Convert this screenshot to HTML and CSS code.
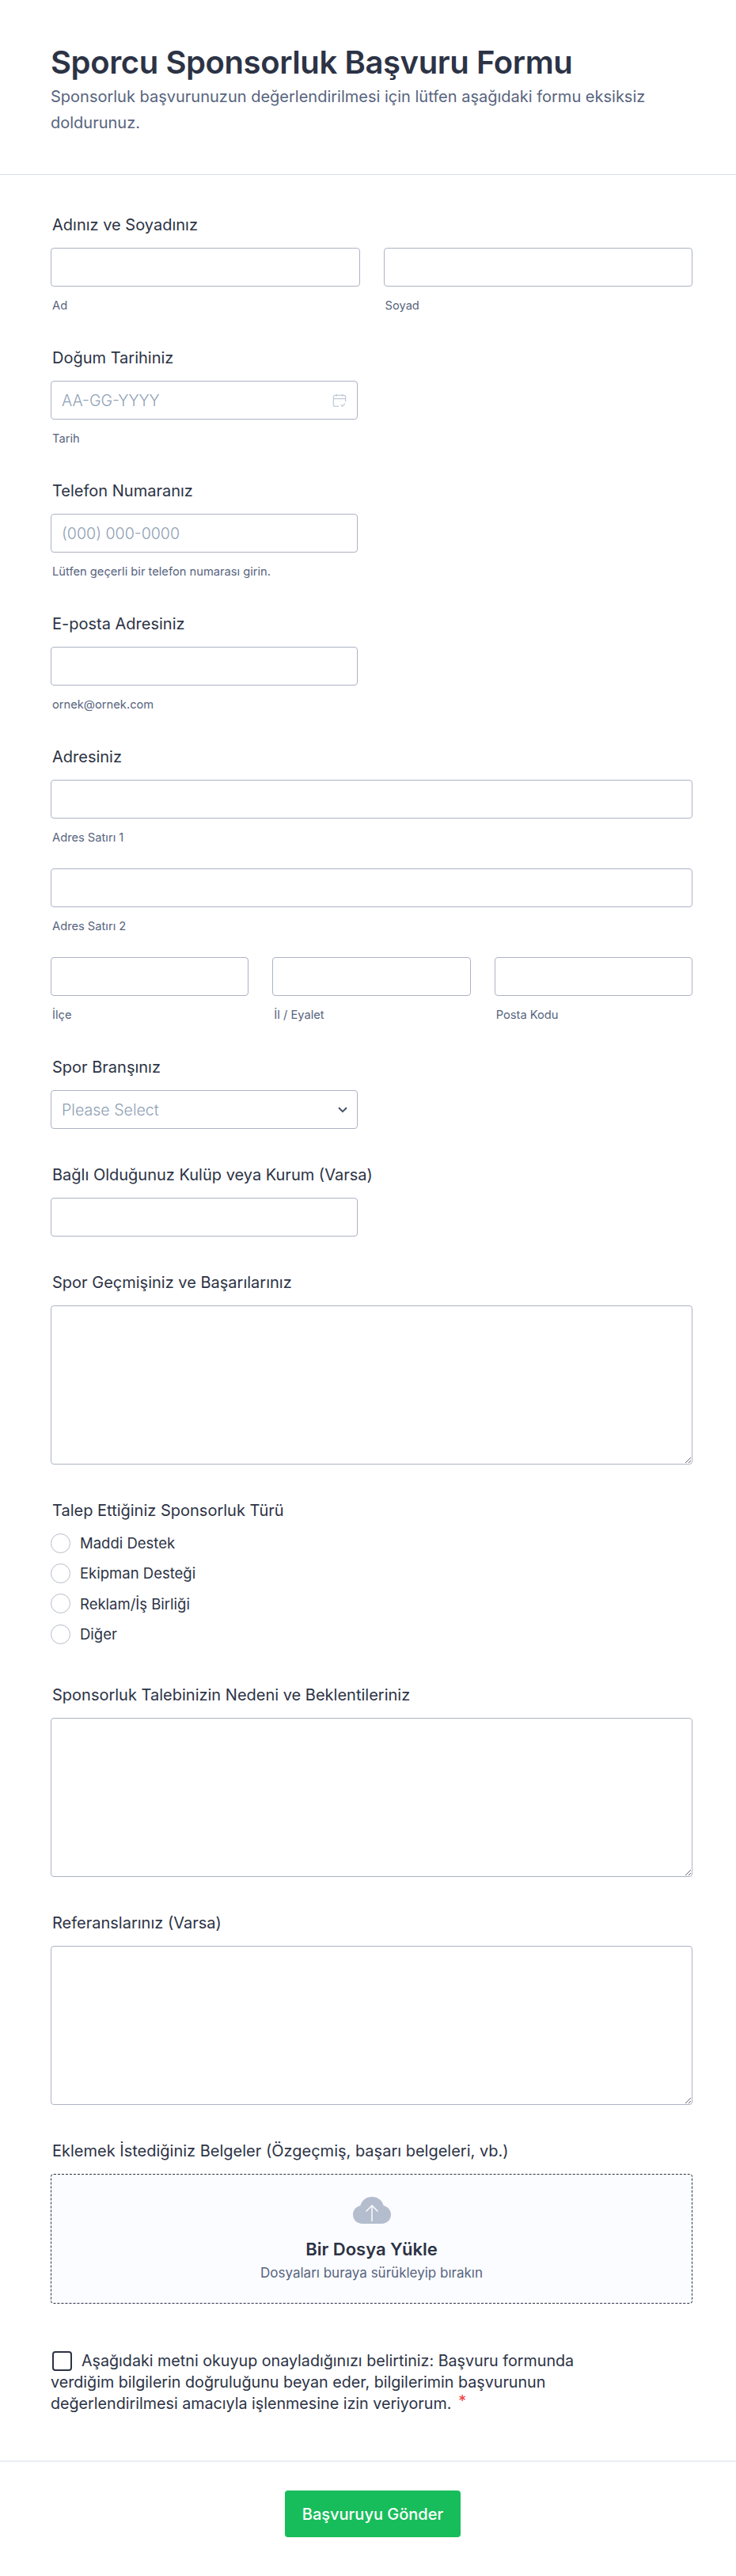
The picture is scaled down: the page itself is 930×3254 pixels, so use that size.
FILE: index.html
```html
<!DOCTYPE HTML>
<html lang="tr">

<head>
  <meta charset="utf-8">
  <title>Sporcu Sponsorluk Başvuru Formu</title>
  <link rel="stylesheet" href="styles.css">
</head>

<body>

  <header class="form-header">
    <h1>Sporcu Sponsorluk Başvuru Formu</h1>
    <p>Sponsorluk başvurunuzun değerlendirilmesi için lütfen aşağıdaki formu eksiksiz doldurunuz.</p>
  </header>

  <form class="form-body">

    <div class="field">
      <label class="field-label">Adınız ve Soyadınız</label>
      <div class="cols-2">
        <div>
          <input class="text-input" type="text">
          <span class="sublabel">Ad</span>
        </div>
        <div>
          <input class="text-input" type="text">
          <span class="sublabel">Soyad</span>
        </div>
      </div>
    </div>

    <div class="field">
      <label class="field-label">Doğum Tarihiniz</label>
      <div class="short input-wrap">
        <input class="text-input" type="text" placeholder="AA-GG-YYYY">
        <svg class="input-icon" width="18" height="18" viewBox="0 0 18 18" fill="none" stroke="#c3cad8" stroke-width="1.3">
          <path d="M8 16.400H3.200a1.800 1.800 0 0 1-1.800-1.800V4.200a1.800 1.800 0 0 1 1.800-1.800h11.600a1.800 1.800 0 0 1 1.800 1.800v6.300" />
          <path d="M1.400 6.600h15.200M5.200 .8v3M12.800 .8v3" />
          <path d="M10.800 14.400l1.800 1.800 3.400-3.600" />
        </svg>
      </div>
      <span class="sublabel">Tarih</span>
    </div>

    <div class="field">
      <label class="field-label">Telefon Numaranız</label>
      <div class="short">
        <input class="text-input" type="text" placeholder="(000) 000-0000">
      </div>
      <span class="sublabel">Lütfen geçerli bir telefon numarası girin.</span>
    </div>

    <div class="field">
      <label class="field-label">E-posta Adresiniz</label>
      <div class="short">
        <input class="text-input" type="text">
      </div>
      <span class="sublabel">ornek@ornek.com</span>
    </div>

    <div class="field field-address">
      <label class="field-label">Adresiniz</label>
      <input class="text-input" type="text">
      <span class="sublabel">Adres Satırı 1</span>
      <input class="text-input next-line" type="text">
      <span class="sublabel">Adres Satırı 2</span>
      <div class="cols-3 next-line">
        <div>
          <input class="text-input" type="text">
          <span class="sublabel">İlçe</span>
        </div>
        <div>
          <input class="text-input" type="text">
          <span class="sublabel">İl / Eyalet</span>
        </div>
        <div>
          <input class="text-input" type="text">
          <span class="sublabel">Posta Kodu</span>
        </div>
      </div>
    </div>

    <div class="field field-nosub">
      <label class="field-label">Spor Branşınız</label>
      <div class="short input-wrap">
        <select class="text-input select-input">
          <option>Please Select</option>
        </select>
        <svg class="select-arrow" width="12" height="8" viewBox="0 0 12 8" fill="none" stroke="#475069" stroke-width="2">
          <path d="M1 1.200l5 5 5-5" />
        </svg>
      </div>
    </div>

    <div class="field field-nosub">
      <label class="field-label">Bağlı Olduğunuz Kulüp veya Kurum (Varsa)</label>
      <div class="short">
        <input class="text-input" type="text">
      </div>
    </div>

    <div class="field field-tall">
      <label class="field-label">Spor Geçmişiniz ve Başarılarınız</label>
      <textarea class="text-area"></textarea>
    </div>

    <div class="field field-radio">
      <label class="field-label">Talep Ettiğiniz Sponsorluk Türü</label>
      <ul class="radio-list">
        <li><span class="radio"></span>Maddi Destek</li>
        <li><span class="radio"></span>Ekipman Desteği</li>
        <li><span class="radio"></span>Reklam/İş Birliği</li>
        <li><span class="radio"></span>Diğer</li>
      </ul>
    </div>

    <div class="field field-tall">
      <label class="field-label">Sponsorluk Talebinizin Nedeni ve Beklentileriniz</label>
      <textarea class="text-area"></textarea>
    </div>

    <div class="field field-tall">
      <label class="field-label">Referanslarınız (Varsa)</label>
      <textarea class="text-area"></textarea>
    </div>

    <div class="field field-upload">
      <label class="field-label">Eklemek İstediğiniz Belgeler (Özgeçmiş, başarı belgeleri, vb.)</label>
      <div class="dropzone">
        <svg class="cloud" width="48" height="34" viewBox="0 0 48 34">
          <path fill="#b4bdce" d="M12 34C5 34 0 29 0 22.500 0 16.800 4 12.200 9.300 11.200 10.800 4.800 16.800 0 24 0s13.200 4.800 14.700 11.200C44 12.200 48 16.800 48 22.500 48 29 43 34 36 34z" />
          <path fill="none" stroke="#fbfcff" stroke-width="1.500" d="M24 31V11M16.500 18.500L24 11l7.500 7.500" />
        </svg>
        <strong>Bir Dosya Yükle</strong>
        <span>Dosyaları buraya sürükleyip bırakın</span>
      </div>
    </div>

    <div class="consent">
      <div><span class="checkbox"></span>Aşağıdaki metni okuyup onayladığınızı belirtiniz: Başvuru formunda</div>
      <div>verdiğim bilgilerin doğruluğunu beyan eder, bilgilerimin başvurunun</div>
      <div class="consent-last">
        <span>değerlendirilmesi amacıyla işlenmesine izin veriyorum.</span>
        <span class="required">*</span>
      </div>
    </div>

    <div class="form-footer">
      <button class="submit-button" type="button">Başvuruyu Gönder</button>
    </div>

  </form>

</body>

</html>
```

FILE: styles.css
```css
* {
  box-sizing: border-box;
}

body {
  margin: 0;
  font-family: Inter, "Noto Sans", sans-serif;
  color: #2c3345;
  background: #fff;
}

.form-header {
  height: 221px;
  padding: 51px 64px 0;
  border-bottom: 1px solid #d8dde9;
}

.form-header h1 {
  margin: 0;
  font-size: 40px;
  line-height: 55px;
  font-weight: 600;
  letter-spacing: -0.4px;
}

.form-header p {
  margin: 0;
  width: 780px;
  font-size: 20px;
  line-height: 33px;
  color: #57647e;
}

.form-body {
  padding-top: 48px;
}

.field {
  height: 168px;
  padding: 0 55px 0 64px;
}

.field-address {
  height: 392px;
}

.field-nosub {
  height: 136px;
}

.field-tall {
  height: 288px;
}

.field-label {
  display: block;
  height: 30px;
  margin-bottom: 14px;
  padding-left: 2px;
  font-size: 20px;
  line-height: 30px;
  font-weight: 420;
}

.text-input {
  display: block;
  width: 100%;
  height: 49px;
  padding: 0 13px;
  border: 1px solid #adb3c4;
  border-radius: 4px;
  background: #fff;
  font-family: inherit;
  font-size: 19.600px;
  color: #2c3345;
}

.text-input::placeholder {
  color: #8f9fb5;
  font-weight: 300;
  opacity: 1;
}

.text-area {
  display: block;
  width: 100%;
  height: 201px;
  border: 1px solid #adb3c4;
  border-radius: 4px;
  background: #fff;
}

.sublabel {
  display: block;
  margin-top: 14px;
  padding-left: 2px;
  font-size: 14.700px;
  line-height: 20px;
  color: #57647e;
}

.short {
  width: 388px;
}

.input-wrap {
  position: relative;
}

.input-icon {
  position: absolute;
  top: 16px;
  right: 14px;
}

.select-input {
  appearance: none;
  color: #8f9fb5;
  font-weight: 300;
}

.select-arrow {
  position: absolute;
  top: 21px;
  right: 13px;
}

.cols-2 {
  display: grid;
  grid-template-columns: 1fr 1fr;
  gap: 30px;
}

.cols-3 {
  display: grid;
  grid-template-columns: repeat(3, 1fr);
  gap: 30px;
}

.next-line {
  margin-top: 29px;
}

.field-radio {
  height: 233px;
}

.radio-list {
  margin: -7px 0 0;
  padding: 0;
  list-style: none;
}

.radio-list li {
  display: flex;
  align-items: center;
  gap: 12px;
  height: 38.300px;
  font-size: 18.500px;
}

.radio {
  width: 25px;
  height: 25px;
  border: 1.500px solid #b8bdc9;
  border-radius: 50%;
}

.field-upload {
  height: 225px;
}

.dropzone {
  display: flex;
  flex-direction: column;
  align-items: center;
  height: 164px;
  padding-top: 28px;
  border: 1px dashed #2c3345;
  border-radius: 4px;
  background: #fbfcff;
}

.dropzone strong {
  margin-top: 18px;
  font-size: 22px;
  line-height: 28px;
  font-weight: 600;
}

.dropzone span {
  margin-top: 4px;
  font-size: 17px;
  line-height: 24px;
  color: #57647e;
}

.consent {
  height: 181px;
  padding: 42px 0 0 64px;
  font-size: 19.700px;
  line-height: 27px;
}

.consent-last {
  display: flex;
  gap: 9px;
}

.checkbox {
  display: inline-block;
  width: 25px;
  height: 25px;
  margin: 0 12px 0 2px;
  border: 2px solid #2c3345;
  border-radius: 4px;
  vertical-align: -6px;
}

.required {
  color: #f23a3c;
  margin-top: -3px;
}

.form-footer {
  display: flex;
  justify-content: center;
  height: 147px;
  padding: 36px 0 0 12px;
  border-top: 2px solid #eaedf3;
}

.submit-button {
  width: 222px;
  height: 59px;
  border: 0;
  border-radius: 4px;
  background: #18bd5b;
  font-family: inherit;
  font-size: 20px;
  font-weight: 500;
  color: #fff;
}
```
